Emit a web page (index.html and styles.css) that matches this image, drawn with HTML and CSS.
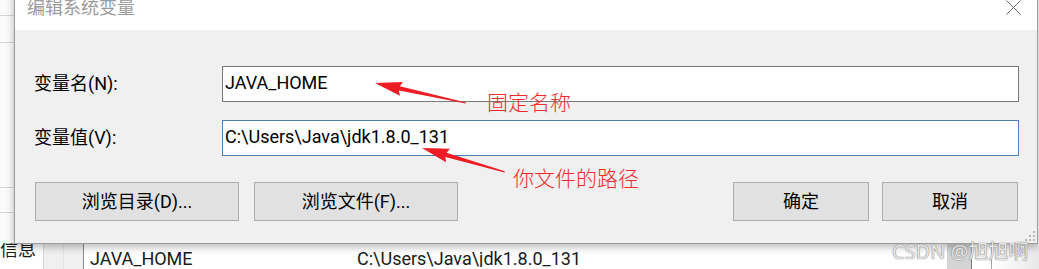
FILE: index.html
```html
<!DOCTYPE html>
<html lang="zh-CN">
<head>
<meta charset="utf-8">
<title>编辑系统变量</title>
<link rel="stylesheet" href="styles.css">
</head>
<body>
<div class="screen">
  <div class="backdrop">
    <div class="bg-top">
      <div class="side-strip">
        <div class="side-row r1"></div>
        <div class="side-row r2"></div>
        <div class="side-row r3"></div>
        <div class="side-row r4"></div>
      </div>
    </div>
    <div class="bg-row">
      <div class="cell info">信息</div>
      <div class="cell gap gap-a"></div>
      <div class="cell gap gap-b"></div>
      <div class="cell name">JAVA_HOME</div>
      <div class="cell value">C:\Users\Java\jdk1.8.0_131</div>
      <div class="cell shade"></div>
      <div class="cell blank1"></div>
      <div class="cell blank2"></div>
    </div>
  </div>

  <div class="dialog">
    <div class="titlebar">
      <span class="title">编辑系统变量</span>
      <svg class="close" width="15" height="15" viewBox="0 0 15 15"><path d="M0.5 0.5 L14.5 14.5 M14.5 0.5 L0.5 14.5" stroke="#6a6a6a" stroke-width="1" fill="none"/></svg>
    </div>
    <div class="content">
      <div class="fields">
        <div class="label">变量名(N):</div>
        <div class="input">JAVA_HOME</div>
        <div class="label">变量值(V):</div>
        <div class="input focus">C:\Users\Java\jdk1.8.0_131</div>
      </div>
      <div class="buttons">
        <div class="btn wide">浏览目录(D)...</div>
        <div class="btn wide">浏览文件(F)...</div>
        <div class="spacer"></div>
        <div class="btn">确定</div>
        <div class="btn">取消</div>
      </div>
    </div>
    <svg class="grip" width="10" height="10" viewBox="0 0 10 10">
      <rect x="8" y="0" width="2" height="2" fill="#b8b8b8"/>
      <rect x="4" y="4" width="2" height="2" fill="#b8b8b8"/>
      <rect x="8" y="4" width="2" height="2" fill="#b8b8b8"/>
      <rect x="0" y="8" width="2" height="2" fill="#b8b8b8"/>
      <rect x="4" y="8" width="2" height="2" fill="#b8b8b8"/>
      <rect x="8" y="8" width="2" height="2" fill="#b8b8b8"/>
    </svg>
  </div>

  <div class="note note-name">固定名称</div>
  <div class="note note-path">你文件的路径</div>

  <svg class="arrows" width="1039" height="269" viewBox="0 0 1039 269">
    <polygon transform="translate(375 83) rotate(12.4)" points="0,0 27,-7 25,-2.2 93,-0.6 93,0.6 25,2.2 27,7" fill="#ee1c25"/>
    <polygon transform="translate(422 148) rotate(16.1)" points="0,0 27,-7 25,-2.2 86,-0.6 86,0.6 25,2.2 27,7" fill="#ee1c25"/>
  </svg>

  <div class="watermark">CSDN @旭旭啊</div>
</div>
</body>
</html>
```

FILE: styles.css
```css
* { box-sizing: border-box; }

html, body {
  margin: 0;
  padding: 0;
  background: #ffffff;
}

body {
  font-family: Roboto, "Noto Sans CJK SC", sans-serif;
  font-size: 18px;
  color: #000;
}

.screen {
  position: relative;
  width: 1039px;
  height: 269px;
  overflow: hidden;
  background: #ffffff;
}

/* ---------- background application ---------- */
.backdrop {
  display: flex;
  flex-direction: column;
  width: 1039px;
  height: 269px;
}

.bg-top {
  height: 243px;
  display: flex;
}

.side-strip {
  width: 14px;
  display: flex;
  flex-direction: column;
  background: #fbfbfb;
}

.side-row { border-bottom: 1px solid #d6d6d6; }
.r1 { height: 16px; }
.r2 { height: 27px; }
.r3 { height: 145px; }
.r4 { height: 25px; }

.bg-row {
  height: 26px;
  display: flex;
  overflow: hidden;
  color: #1a1a1a;
}

.cell {
  white-space: nowrap;
  overflow: hidden;
}

.info {
  width: 44px;
  margin-top: -5px;
  height: 31px;
  line-height: 24px;
  overflow: visible;
  border-right: 1px solid #d8d8d8;
}

.gap {
  height: 26px;
  background: #f0f0f0;
}
.gap-a { width: 20px; border-right: 1px solid #e2e2e2; }
.gap-b { width: 20px; border-right: 1px solid #8a8a8a; }

.name,
.value {
  height: 24px;
  padding-top: 6px;
  line-height: 20px;
}

.name {
  width: 273px;
  padding-left: 6px;
}

.value {
  width: 590px;
}

.shade {
  height: 26px;
  width: 25px;
  background: #d4d4d4;
  border-right: 1px solid #777;
}

.blank1 {
  height: 26px;
  width: 20px;
  border-right: 1px solid #a8a8a8;
}

.blank2 {
  height: 26px;
  flex: 1;
  background: linear-gradient(to right, #ffffff, #e8e8e8);
}

/* ---------- dialog window ---------- */
.dialog {
  position: absolute;
  left: 14px;
  top: -16px;
  width: 1024px;
  height: 260px;
  border: 1px solid #9c9c9c;
  background: #f0f0f0;
  display: flex;
  flex-direction: column;
  box-shadow: 0 3px 8px rgba(0, 0, 0, 0.28);
}

.titlebar {
  height: 45px;
  background: #ffffff;
  display: flex;
  align-items: center;
  justify-content: space-between;
  padding: 0 16px 0 12px;
}

.title {
  color: #9a9a9a;
  font-size: 18px;
  line-height: 20px;
}

.close { display: block; }

.content {
  flex: 1;
  padding: 36px 18px 22px 19px;
  display: flex;
  flex-direction: column;
}

.fields {
  display: grid;
  grid-template-columns: 188px 1fr;
  row-gap: 18px;
  align-items: center;
}

.label {
  line-height: 20px;
}

.input {
  height: 36px;
  background: #ffffff;
  border: 1px solid #7a7a7a;
  padding-left: 2px;
  line-height: 32px;
  white-space: nowrap;
}

.input.focus {
  border-color: #4a7fb3;
}

.buttons {
  margin: 26px 1px 0 1px;
  display: flex;
}

.btn {
  height: 39px;
  width: 136px;
  background: #e1e1e1;
  border: 1px solid #adadad;
  display: flex;
  align-items: center;
  justify-content: center;
  line-height: 20px;
}

.btn.wide { width: 204px; }
.btn.wide + .btn.wide { margin-left: 15px; }
.spacer { flex: 1; }
.btn + .btn:not(.wide) { margin-left: 13px; }

.grip {
  position: absolute;
  right: 2px;
  bottom: 2px;
}

/* ---------- annotations ---------- */
.note {
  position: absolute;
  color: #f22a2a;
  font-family: "Noto Sans CJK SC", sans-serif;
  font-weight: 300;
  font-size: 21px;
  line-height: 24px;
  white-space: nowrap;
}

.note-name { left: 487px; top: 89px; }
.note-path { left: 513px; top: 165px; }

.arrows {
  position: absolute;
  left: 0;
  top: 0;
  pointer-events: none;
}

.watermark {
  position: absolute;
  left: 892px;
  top: 240px;
  font-family: "Noto Sans", "Noto Sans CJK SC", sans-serif;
  font-size: 20px;
  line-height: 23px;
  color: rgba(250, 250, 250, 0.85);
  text-shadow: 0 0 1px #7a7a7a, 0 0 1px #7a7a7a;
  white-space: nowrap;
}
```
